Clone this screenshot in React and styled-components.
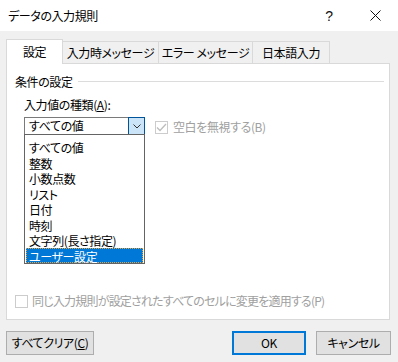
import React from 'react';
import styled, { createGlobalStyle } from 'styled-components';

const Global = createGlobalStyle`
  html, body { margin: 0; padding: 0; background: #f0f0f0; }
  body {
    font-family: "Noto Sans CJK JP", "Noto Sans", sans-serif;
    font-size: 12px;
    color: #000;
  }
  * { box-sizing: border-box; }
`;

const Dialog = styled.div`
  width: 398px;
  height: 362px;
  background: #f0f0f0;
  display: flex;
  flex-direction: column;
  overflow: hidden;
  font-feature-settings: "palt";
  letter-spacing: -0.4px;
  line-height: 16px;
`;

const TitleBar = styled.div`
  height: 31px;
  flex: none;
  background: #fff;
  display: flex;
  align-items: center;
  padding-left: 8px;
`;

const Title = styled.div`
  flex: 1;
  font-size: 12px;
`;

const TitleButton = styled.div`
  width: 46px;
  height: 31px;
  display: flex;
  align-items: center;
  justify-content: center;
  font-family: "Liberation Sans", sans-serif;
  font-size: 14px;
  color: #111;
`;

const Body = styled.div`
  flex: 1;
  display: flex;
  flex-direction: column;
  padding: 8px 0 0 6px;
`;

const TabRow = styled.div`
  display: flex;
  align-items: flex-end;
  height: 24px;
  position: relative;
  z-index: 2;
`;

const Tab = styled.div`
  width: ${p => p.$w}px;
  height: ${p => (p.$active ? 25 : 22)}px;
  margin-bottom: ${p => (p.$active ? -1 : 0)}px;
  margin-left: ${p => (p.$first ? 0 : -1)}px;
  border: 1px solid #d9d9d9;
  border-bottom: 0;
  background: ${p => (p.$active ? '#fff' : '#f0f0f0')};
  display: flex;
  align-items: center;
  justify-content: center;
  padding-top: ${p => (p.$active ? 0 : 1)}px;
  position: relative;
  z-index: ${p => (p.$active ? 3 : 1)};
  white-space: nowrap;
`;

const Panel = styled.div`
  width: 384px;
  height: 257px;
  background: #fff;
  border: 1px solid #d9d9d9;
  display: flex;
  flex-direction: column;
  position: relative;
  z-index: 1;
`;

const GroupHeader = styled.div`
  display: flex;
  align-items: center;
  margin-top: 10px;
  padding-left: 8px;
  padding-right: 5px;
  height: 16px;
`;

const GroupLine = styled.div`
  flex: 1;
  height: 1px;
  background: #dcdcdc;
  margin-left: 5px;
  margin-top: -1px;
`;

const FieldLabel = styled.div`
  margin-top: 7px;
  padding-left: 17px;
  height: 16px;
`;

const U = styled.span`
  text-decoration: underline;
  text-underline-offset: 1px;
`;

const FieldRow = styled.div`
  display: flex;
  align-items: flex-start;
  margin-top: 4px;
  padding-left: 17px;
`;

const ComboWrap = styled.div`
  position: relative;
  width: 121px;
  height: 18px;
`;

const Combo = styled.div`
  width: 121px;
  height: 18px;
  border: 1px solid #7a7a7a;
  display: flex;
  align-items: center;
  padding-left: 4px;
`;

const ComboValue = styled.div`
  flex: 1;
`;

const ComboButton = styled.div`
  position: absolute;
  right: 0;
  top: 0;
  width: 17px;
  height: 18px;
  background: #cce4f7;
  border: 1px solid #005499;
  display: flex;
  align-items: center;
  justify-content: center;
`;

const ListBox = styled.div`
  position: absolute;
  left: 0;
  top: 17px;
  width: 121px;
  height: 130px;
  background: #fff;
  border: 1px solid #646464;
  display: flex;
  flex-direction: column;
  padding-top: 4px;
  z-index: 5;
`;

const ListItem = styled.div`
  height: 15.5px;
  line-height: 15px;
  padding-left: 2px;
  white-space: nowrap;
  background: ${p => (p.$selected ? '#0078d7' : 'transparent')};
  color: ${p => (p.$selected ? '#fff' : '#000')};
  border: 1px dotted ${p => (p.$selected ? '#e8a33c' : 'transparent')};
  margin: 0 1px;
`;

const CheckRow = styled.label`
  display: flex;
  align-items: center;
  color: #a0a0a0;
  margin-left: ${p => p.$ml || 0}px;
  margin-top: ${p => p.$mt || 0}px;
  margin-bottom: ${p => p.$mb || 0}px;
  letter-spacing: ${p => p.$ls ?? -0.4}px;
  height: 16px;
  white-space: nowrap;
`;

const Box = styled.span`
  width: 13px;
  height: 13px;
  border: 1px solid #cccccc;
  background: #fff;
  display: inline-flex;
  align-items: center;
  justify-content: center;
  margin-right: ${p => p.$gap}px;
  flex: none;
`;

const Spacer = styled.div`
  flex: 1;
`;

const ButtonRow = styled.div`
  display: flex;
  align-items: center;
  margin-top: 11px;
  padding-right: 7px;
`;

const Button = styled.div`
  width: ${p => p.$w}px;
  height: 24px;
  background: #e1e1e1;
  border: ${p => (p.$primary ? '2px solid #0078d7' : '1px solid #adadad')};
  display: flex;
  align-items: center;
  justify-content: center;
  margin-left: ${p => p.$ml || 0}px;
  white-space: nowrap;
`;

const items = ['すべての値', '整数', '小数点数', 'リスト', '日付', '時刻', '文字列(長さ指定)', 'ユーザー設定'];

export default function App() {
  return (
    <>
      <Global />
      <Dialog>
        <TitleBar>
          <Title>データの入力規則</Title>
          <TitleButton>?</TitleButton>
          <TitleButton>
            <svg width="11" height="11" viewBox="0 0 11 11">
              <path d="M0.5 0.5 L10.5 10.5 M10.5 0.5 L0.5 10.5" stroke="#111" strokeWidth="1" />
            </svg>
          </TitleButton>
        </TitleBar>
        <Body>
          <TabRow>
            <Tab $active $first $w={57}>設定</Tab>
            <Tab $w={97}>入力時メッセージ</Tab>
            <Tab $w={95}>エラー メッセージ</Tab>
            <Tab $w={78}>日本語入力</Tab>
          </TabRow>
          <Panel>
            <GroupHeader>
              条件の設定
              <GroupLine />
            </GroupHeader>
            <FieldLabel>
              入力値の種類(<U>A</U>):
            </FieldLabel>
            <FieldRow>
              <ComboWrap>
                <Combo>
                  <ComboValue>すべての値</ComboValue>
                </Combo>
                <ComboButton>
                  <svg width="8" height="5" viewBox="0 0 8 5">
                    <path d="M0.5 0.5 L4 4 L7.5 0.5" stroke="#333" strokeWidth="1" fill="none" />
                  </svg>
                </ComboButton>
                <ListBox>
                  {items.map(t => (
                    <ListItem key={t} $selected={t === 'ユーザー設定'}>{t}</ListItem>
                  ))}
                </ListBox>
              </ComboWrap>
              <CheckRow $ml={10} $mt={2}>
                <Box $gap={5}>
                  <svg width="11" height="9" viewBox="0 0 11 9">
                    <path d="M1 4.5 L4 7.5 L10 1" stroke="#bdbdbd" strokeWidth="1.3" fill="none" />
                  </svg>
                </Box>
                空白を無視する(B)
              </CheckRow>
            </FieldRow>
            <Spacer />
            <CheckRow $ml={8} $mb={10} $ls={-0.8}>
              <Box $gap={4} />
              同じ入力規則が設定されたすべてのセルに変更を適用する(P)
            </CheckRow>
          </Panel>
          <ButtonRow>
            <Button $w={88}>すべてクリア(<U>C</U>)</Button>
            <Spacer />
            <Button $primary $w={74}>OK</Button>
            <Button $w={75} $ml={10}>キャンセル</Button>
          </ButtonRow>
        </Body>
      </Dialog>
    </>
  );
}
